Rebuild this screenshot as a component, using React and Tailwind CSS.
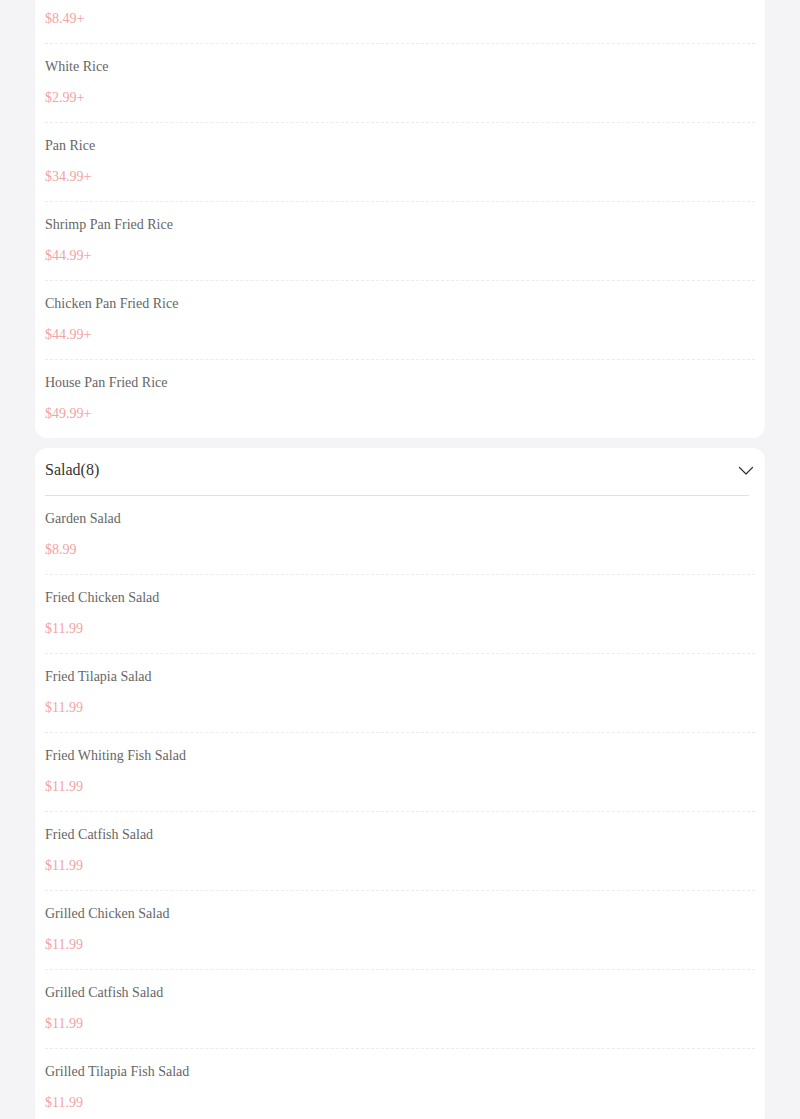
import React from "react";

const riceItems = [
  { name: "Fried Rice", price: "$8.49+" },
  { name: "White Rice", price: "$2.99+" },
  { name: "Pan Rice", price: "$34.99+" },
  { name: "Shrimp Pan Fried Rice", price: "$44.99+" },
  { name: "Chicken Pan Fried Rice", price: "$44.99+" },
  { name: "House Pan Fried Rice", price: "$49.99+" },
];

const saladItems = [
  { name: "Garden Salad", price: "$8.99" },
  { name: "Fried Chicken Salad", price: "$11.99" },
  { name: "Fried Tilapia Salad", price: "$11.99" },
  { name: "Fried Whiting Fish Salad", price: "$11.99" },
  { name: "Fried Catfish Salad", price: "$11.99" },
  { name: "Grilled Chicken Salad", price: "$11.99" },
  { name: "Grilled Catfish Salad", price: "$11.99" },
  { name: "Grilled Tilapia Fish Salad", price: "$11.99" },
];

const MenuItem = ({ item, last }) => (
  <div
    className={`pt-[14px] pb-[15px] flex flex-col gap-[13px] ${
      last ? "" : "border-b border-dashed border-[#ececec]"
    }`}
  >
    <h3 className="text-[14px] leading-[18px] text-[#666]">{item.name}</h3>
    <p className="text-[14px] leading-[18px] text-[#f2a3a3]">{item.price}</p>
  </div>
);

const Chevron = () => (
  <svg width="16" height="10" viewBox="0 0 16 10" fill="none">
    <path
      d="M1.5 1.5L8 8L14.5 1.5"
      stroke="#333"
      strokeWidth="1.2"
      strokeLinecap="round"
      strokeLinejoin="round"
    />
  </svg>
);

export default function App() {
  return (
    <div
      className="min-h-[1119px] bg-[#f4f4f6] px-[35px] pb-4 overflow-hidden"
      style={{ fontFamily: '"Liberation Serif", "Times New Roman", serif' }}
    >
      <div className="bg-white rounded-b-[12px] pl-[10px] pr-[10px] -mt-[35px]">
        {riceItems.map((item, i) => (
          <MenuItem
            key={item.name}
            item={item}
            last={i === riceItems.length - 1}
          />
        ))}
      </div>

      <div className="bg-white rounded-[12px] pl-[10px] pr-[10px] mt-[10px]">
        <div className="pr-[6px]">
          <div className="flex items-center justify-between h-[48px] border-b border-[#e2e2e2] pb-[3px]">
            <h2 className="text-[16px] text-[#333]">Salad(8)</h2>
            <div className="-mr-[5px] mt-[1px]">
              <Chevron />
            </div>
          </div>
        </div>
        {saladItems.map((item, i) => (
          <MenuItem
            key={item.name}
            item={item}
            last={i === saladItems.length - 1}
          />
        ))}
      </div>
    </div>
  );
}
